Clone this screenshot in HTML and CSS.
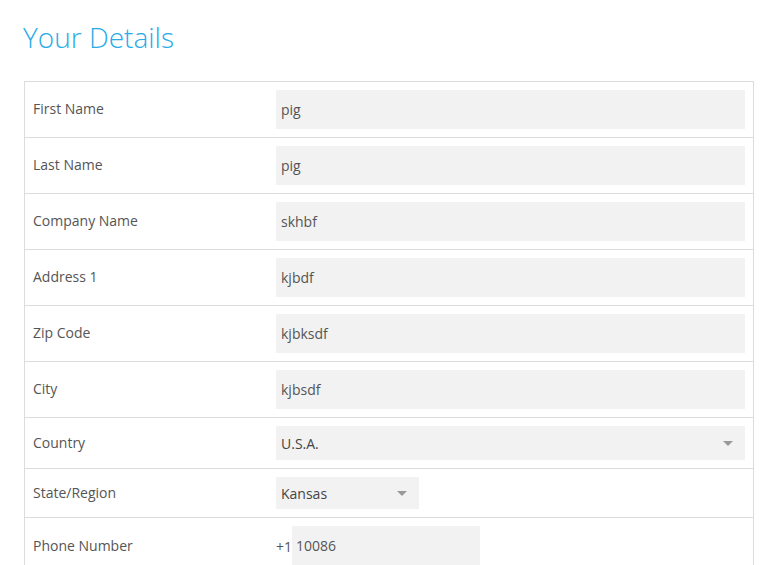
FILE: index.html
```html
<!DOCTYPE html>
<html>
<head>
<meta charset="utf-8">
<link rel="stylesheet" href="styles.css">
</head>
<body>
<div class="page">
  <h1 class="title">Your Details</h1>
  <div class="form">
    <div class="row"><div class="label">First Name</div><div class="field"><div class="input">pig</div></div></div>
    <div class="row"><div class="label">Last Name</div><div class="field"><div class="input">pig</div></div></div>
    <div class="row"><div class="label">Company Name</div><div class="field"><div class="input">skhbf</div></div></div>
    <div class="row"><div class="label">Address 1</div><div class="field"><div class="input">kjbdf</div></div></div>
    <div class="row"><div class="label">Zip Code</div><div class="field"><div class="input">kjbksdf</div></div></div>
    <div class="row"><div class="label">City</div><div class="field"><div class="input">kjbsdf</div></div></div>
    <div class="row"><div class="label">Country</div><div class="field"><div class="select select-wide"><span>U.S.A.</span><span class="caret"></span></div></div></div>
    <div class="row"><div class="label">State/Region</div><div class="field"><div class="select select-small"><span>Kansas</span><span class="caret"></span></div></div></div>
    <div class="row"><div class="label">Phone Number</div><div class="field phone"><span class="prefix">+1</span><div class="input input-phone">10086</div></div></div>
  </div>
</div>
</body>
</html>
```
FILE: styles.css
```css
* { box-sizing: border-box; }
html, body { margin: 0; padding: 0; background: #fff; }
body { font-family: "Open Sans", "Liberation Sans", sans-serif; color: #555; }
.page { padding: 0 15px 0 24px; }
.title {
  margin: 0;
  padding-top: 18px;
  height: 81px;
  font-size: 28px;
  font-weight: 300;
  color: #29abe8;
  line-height: 38px;
  margin-left: -1px;
}
.form {
  width: 730px;
  border: 1px solid #dcdcdc;
  border-bottom: none;
}
.row {
  display: flex;
  align-items: center;
  border-bottom: 1px solid #dcdcdc;
  padding: 8px 8px 8px 0;
}
.label {
  width: 251px;
  padding-left: 8px;
  padding-bottom: 2px;
  font-size: 14px;
}
.field { flex: 1; display: flex; align-items: center; }
.input {
  width: 100%;
  height: 39px;
  background: #f2f2f2;
  font-size: 14px;
  line-height: 39px;
  padding-left: 5px;
  color: #555;
}
.select {
  display: flex;
  align-items: center;
  justify-content: space-between;
  background: #f2f2f2;
  font-size: 14px;
  color: #444;
  padding: 0 12px 0 5px;
}
.select-wide { width: 100%; height: 34px; }
.select-small { width: 143px; height: 32px; }
.caret {
  width: 0; height: 0;
  border-left: 5px solid transparent;
  border-right: 5px solid transparent;
  border-top: 5px solid #999;
}
.phone { align-self: flex-start; }
.prefix { font-size: 14px; width: 16px; color: #555; }
.input-phone { width: 188px; height: 40px; padding-left: 4px; }
```
